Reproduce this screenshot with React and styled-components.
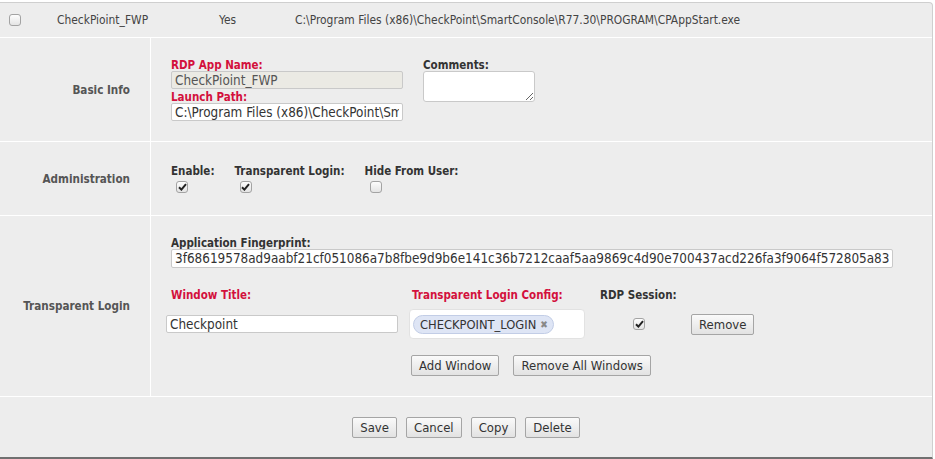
import React from "react";
import styled, { createGlobalStyle } from "styled-components";

const Global = createGlobalStyle`
  html, body { margin: 0; padding: 0; background: #fff; }
  body { font-family: "DejaVu Sans Condensed", "Liberation Sans", sans-serif; font-size: 12px; color: #333; }
  * { box-sizing: border-box; }
`;

const Panel = styled.div`
  margin-top: 2px;
  width: 933px;
  background: #ededed;
  border-top: 1px solid #cfcfcf;
  border-right: 1px solid #cfcfcf;
  border-bottom: 2px solid #707070;
  border-top-right-radius: 4px;
`;

const HeaderRow = styled.div`
  display: grid;
  grid-template-columns: 57px 162px 76px 1fr;
  align-items: center;
  height: 35px;
  border-bottom: 1px solid #fff;
  color: #444;
  font-size: 11.9px;
`;

const HeaderCheckCell = styled.div`
  padding-left: 9px;
  display: flex;
  align-items: center;
`;

const Section = styled.div`
  display: grid;
  grid-template-columns: 151px 1fr;
  height: ${(p) => p.$h}px;
  border-bottom: 1px solid #fff;
`;

const SectionLabel = styled.div`
  display: flex;
  align-items: center;
  justify-content: flex-end;
  padding-right: 20px;
  border-right: 1px solid #fff;
  font-weight: bold;
  color: #555;
  font-size: 11.6px;
`;

const SectionBody = styled.div`
  padding: 20px 20px;
  display: flex;
  flex-direction: column;
  justify-content: ${(p) => (p.$center ? "center" : "flex-start")};
`;

const FieldLabel = styled.div`
  font-weight: bold;
  font-size: 11.5px;
  line-height: 11px;
  padding-top: 2px;
  height: 13px;
  color: ${(p) => (p.$req ? "#d3103c" : "#333")};
  white-space: nowrap;
`;

const TextInput = styled.input`
  display: block;
  width: ${(p) => p.$w}px;
  height: ${(p) => p.$h || 18}px;
  padding: 0 3px;
  border: 1px solid #c9c9c9;
  border-radius: 2px;
  background: ${(p) => (p.disabled ? "#ebeae4" : "#fff")};
  color: ${(p) => (p.disabled ? "#555" : "#333")};
  font-family: inherit;
  font-size: 13.4px;
  outline: none;
`;

const TextArea = styled.textarea`
  display: block;
  width: 112px;
  height: 31px;
  border: 1px solid #c9c9c9;
  border-radius: 3px;
  background: #fff;
  resize: both;
  font-family: inherit;
  margin: 0;
`;

const BasicRow = styled.div`
  display: flex;
  gap: 20px;
`;

const Col = styled.div`
  display: flex;
  flex-direction: column;
`;

const AdminRow = styled.div`
  display: flex;
  gap: 20px;
`;

const BoxWrap = styled.span`
  display: inline-flex;
  align-items: center;
  justify-content: center;
  width: 12px;
  height: 12px;
  margin-left: ${(p) => p.$ml || 0}px;
  margin-top: ${(p) => p.$mt || 0}px;
  border: 1px solid #a3a3a3;
  border-radius: 3px;
  background: linear-gradient(#fdfdfd, #e4e4e4);
`;

function Check({ checked, ml, mt }) {
  return (
    <BoxWrap $ml={ml} $mt={mt}>
      {checked && (
        <svg width="9" height="8" viewBox="0 0 9 8">
          <path d="M1 4.2 L3.4 6.6 L8 1.2" fill="none" stroke="#222" strokeWidth="2" />
        </svg>
      )}
    </BoxWrap>
  );
}

const WinGrid = styled.div`
  margin-top: 20px;
  margin-left: -5px;
  display: grid;
  grid-template-columns: 243px 191px 91px auto;
  grid-template-rows: 13px 30px;
  row-gap: 8px;
  align-items: center;
`;

const Cell = styled.div`
  padding-left: ${(p) => p.$pl || 0}px;
  display: flex;
  align-items: center;
`;

const TagBox = styled.div`
  width: 176px;
  height: 30px;
  background: #fff;
  border: 1px solid #e2e2e2;
  border-radius: 4px;
  padding: 4px 3px;
  display: flex;
  align-items: center;
`;

const Chip = styled.span`
  display: inline-flex;
  align-items: center;
  height: 19px;
  padding: 0 5px 0 6px;
  background: #dee5f5;
  border: 1px solid #c2cde6;
  border-radius: 10px;
  color: #333;
  font-size: 12.8px;
  gap: 4px;
`;

const ChipX = styled.span`
  color: #888;
  font-size: 10px;
  font-weight: bold;
`;

const Button = styled.button`
  height: 21px;
  padding: 0 7px;
  border: 1px solid #a5a5a5;
  border-radius: 2px;
  background: linear-gradient(#fafafa, #e2e2e2);
  color: #333;
  font-family: inherit;
  font-size: 13px;
  line-height: 19px;
  cursor: pointer;
`;

const ButtonRow = styled.div`
  display: flex;
  gap: ${(p) => p.$gap}px;
  justify-content: ${(p) => (p.$center ? "center" : "flex-start")};
  padding-left: ${(p) => p.$pl || 0}px;
  margin-top: ${(p) => p.$mt || 0}px;
`;

const Footer = styled.div`
  height: 60px;
  display: flex;
  align-items: center;
  justify-content: center;
`;

export default function App() {
  return (
    <>
      <Global />
      <Panel>
        <HeaderRow>
          <HeaderCheckCell>
            <Check />
          </HeaderCheckCell>
          <div>CheckPioint_FWP</div>
          <div>Yes</div>
          <div>C:\Program Files (x86)\CheckPoint\SmartConsole\R77.30\PROGRAM\CPAppStart.exe</div>
        </HeaderRow>

        <Section $h={104}>
          <SectionLabel>Basic Info</SectionLabel>
          <SectionBody>
            <BasicRow>
              <Col>
                <FieldLabel $req>RDP App Name:</FieldLabel>
                <TextInput $w={232} disabled defaultValue="CheckPioint_FWP" />
                <FieldLabel $req style={{ marginTop: 1 }}>Launch Path:</FieldLabel>
                <TextInput $w={232} defaultValue="C:\Program Files (x86)\CheckPoint\SmartConsole\R77.30\PROGRAM\CPAppStart.exe" />
              </Col>
              <Col>
                <FieldLabel>Comments:</FieldLabel>
                <TextArea />
              </Col>
            </BasicRow>
          </SectionBody>
        </Section>

        <Section $h={74}>
          <SectionLabel>Administration</SectionLabel>
          <SectionBody $center>
            <AdminRow>
              <Col>
                <FieldLabel>Enable:</FieldLabel>
                <Check checked ml={5} mt={4} />
              </Col>
              <Col>
                <FieldLabel>Transparent Login:</FieldLabel>
                <Check checked ml={5} mt={4} />
              </Col>
              <Col>
                <FieldLabel>Hide From User:</FieldLabel>
                <Check ml={5} mt={4} />
              </Col>
            </AdminRow>
          </SectionBody>
        </Section>

        <Section $h={181}>
          <SectionLabel>Transparent Login</SectionLabel>
          <SectionBody>
            <FieldLabel>Application Fingerprint:</FieldLabel>
            <TextInput
              $w={722}
              $h={19}
              defaultValue="3f68619578ad9aabf21cf051086a7b8fbe9d9b6e141c36b7212caaf5aa9869c4d90e700437acd226fa3f9064f572805a83"
            />
            <WinGrid>
              <Cell $pl={5}><FieldLabel $req>Window Title:</FieldLabel></Cell>
              <Cell $pl={3}><FieldLabel $req>Transparent Login Config:</FieldLabel></Cell>
              <Cell><FieldLabel>RDP Session:</FieldLabel></Cell>
              <Cell />
              <Cell><TextInput $w={232} defaultValue="Checkpoint" /></Cell>
              <Cell>
                <TagBox>
                  <Chip>
                    CHECKPOINT_LOGIN <ChipX>✖</ChipX>
                  </Chip>
                </TagBox>
              </Cell>
              <Cell $pl={33}><Check checked /></Cell>
              <Cell><Button>Remove</Button></Cell>
            </WinGrid>
            <ButtonRow $gap={14} $pl={240} $mt={16}>
              <Button>Add Window</Button>
              <Button>Remove All Windows</Button>
            </ButtonRow>
          </SectionBody>
        </Section>

        <Footer>
          <ButtonRow $gap={9} $center>
            <Button>Save</Button>
            <Button>Cancel</Button>
            <Button>Copy</Button>
            <Button>Delete</Button>
          </ButtonRow>
        </Footer>
      </Panel>
    </>
  );
}
